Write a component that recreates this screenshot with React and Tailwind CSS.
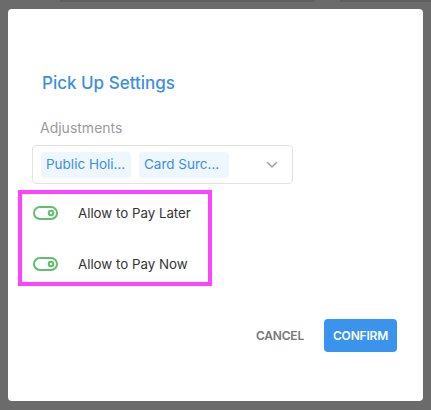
import React from "react";

const Toggle = () => (
  <svg width="26" height="14" viewBox="0 0 26 14" fill="none">
    <rect x="1" y="1" width="23" height="12" rx="6" stroke="#5fbf6a" strokeWidth="2" />
    <circle cx="18" cy="7" r="2.3" stroke="#5fbf6a" strokeWidth="2" />
  </svg>
);

const Chip = ({ label }) => (
  <span className="flex h-[26px] w-[90px] items-center rounded-[4px] bg-[#eef6fe] pl-[5px] text-[13.5px] text-[#3b8fe6]">
    {label}
  </span>
);

export default function App() {
  const options = ["Allow to Pay Later", "Allow to Pay Now"];

  return (
    <div
      className="relative h-[410px] w-[431px] overflow-hidden bg-[#6b6b6b] pl-[8px] pt-[9px]"
      style={{ fontFamily: "Inter, 'Liberation Sans', sans-serif" }}
    >
      {/* page behind the overlay */}
      <div className="absolute left-[60px] top-0 h-[2px] w-[255px] bg-[#5f5f5f]" />
      <div className="absolute left-[340px] top-0 h-[2px] w-[91px] bg-[#5f5f5f]" />

      <div className="relative flex h-[392px] w-[415px] flex-col rounded-[4px] bg-white">
        <h2 className="ml-[34px] mt-[62px] text-[17px] font-medium leading-[24px] text-[#3b8fe6]">
          Pick Up Settings
        </h2>

        <div className="ml-[32px] mt-[23px] text-[14px] leading-[20px] text-[#9a9a9a]">
          Adjustments
        </div>

        <div className="ml-[24px] mt-[7px] flex h-[39px] w-[261px] items-center rounded-[4px] border border-[#e2e2e2] pl-[8px] pr-[14px]">
          <div className="flex gap-[8px]">
            <Chip label="Public Holi..." />
            <Chip label="Card Surc..." />
          </div>
          <svg className="ml-auto" width="12" height="8" viewBox="0 0 12 8" fill="none">
            <path d="M1.5 1.5 6 6l4.5-4.5" stroke="#a5a5a5" strokeWidth="1.6" strokeLinecap="round" strokeLinejoin="round" />
          </svg>
        </div>

        <div className="ml-[10px] mt-[6px] flex h-[96px] w-[194px] flex-col justify-center gap-[31px] border-4 border-[#ff44ff] pl-[11px]">
          {options.map((o) => (
            <div key={o} className="flex items-center">
              <Toggle />
              <span className="ml-[19px] text-[13.3px] leading-[20px] text-[#333333]">{o}</span>
            </div>
          ))}
        </div>

        <div className="mt-auto mb-[49px] mr-[26px] flex items-center justify-end gap-[20px]">
          <button className="text-[12px] font-semibold tracking-[-0.2px] text-[#777777]">CANCEL</button>
          <button className="h-[33px] w-[73px] rounded-[4px] bg-[#3a93ec] text-[12px] font-semibold tracking-[-0.2px] text-white">
            CONFIRM
          </button>
        </div>
      </div>
    </div>
  );
}
